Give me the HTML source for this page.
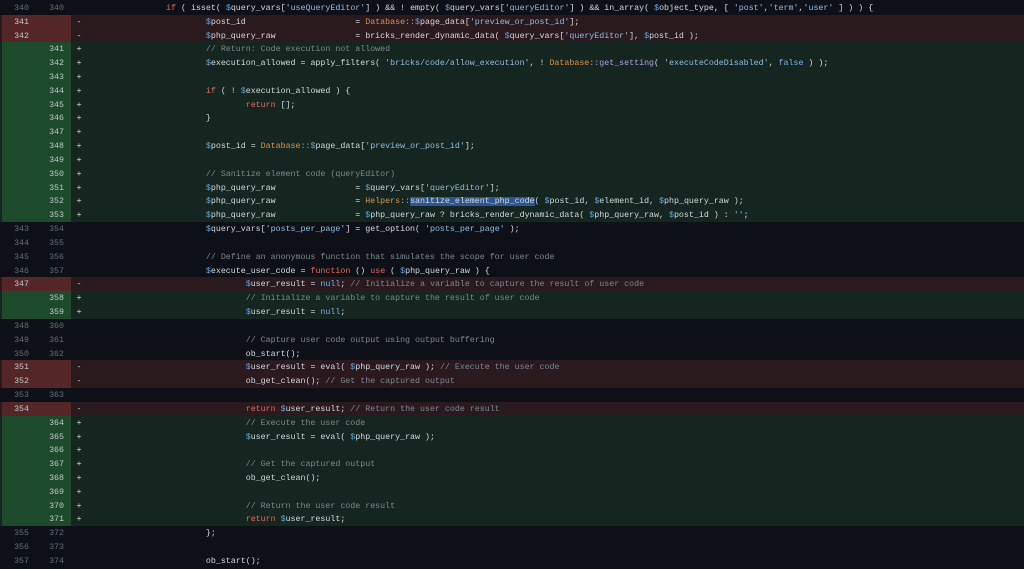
<!DOCTYPE html>
<html><head><meta charset="utf-8">
<style>
html,body{margin:0;padding:0;width:1024px;height:567px;overflow:hidden;background:#0d1117}
#w{position:absolute;left:0;top:.85px;width:1024px}
.r{position:relative;height:13.84px;width:1024px;font:8.31px/13.84px "Liberation Mono",monospace;color:#d3d9df;white-space:pre;tab-size:8}
.r>i{position:absolute;top:1px;font-style:normal;filter:blur(.35px)}
.r>i.g{top:0;filter:none}
.g{left:2px;width:69px;height:13.84px}
.a,.n{text-align:right;width:20px;color:#656c76}
.a{left:9px}.n{left:44px}
.m{left:76.5px}
.t{left:86.4px}
.d{background:#2a1a1e}.d .g{background:#552628}
.e{background:#14261f}.e .g{background:#1d4a2b}
.d .a,.d .n,.e .a,.e .n{color:#c0c8d0}
u{text-decoration:none}
.k{color:#e5675f}.s{color:#8fbde2}.v{color:#64a6de}.c{color:#7d868f}.o{color:#d99350}.p{color:#bd9be8}.b{color:#70b4ee}.q{color:#a0a8b0}
.h{background:#2f5590}
</style></head><body><div id="w">
<div class="r"><i class="a">340</i><i class="n">340</i><i class="t">		<u class="k">if</u> ( isset( <u class="v">$</u>query_vars[<u class="s">'useQueryEditor'</u>] ) &amp;&amp; ! empty( <u class="v">$</u>query_vars[<u class="s">'queryEditor'</u>] ) &amp;&amp; in_array( <u class="v">$</u>object_type, [ <u class="s">'post'</u>,<u class="s">'term'</u>,<u class="s">'user'</u> ] ) ) {</i></div>
<div class="r d"><i class="g"></i><i class="a">341</i><i class="m">-</i><i class="t">			<u class="v">$</u>post_id                      = <u class="o">Database</u><u class="q">::</u><u class="v">$</u>page_data[<u class="s">'preview_or_post_id'</u>];</i></div>
<div class="r d"><i class="g"></i><i class="a">342</i><i class="m">-</i><i class="t">			<u class="v">$</u>php_query_raw                = bricks_render_dynamic_data( <u class="v">$</u>query_vars[<u class="s">'queryEditor'</u>], <u class="v">$</u>post_id );</i></div>
<div class="r e"><i class="g"></i><i class="n">341</i><i class="m">+</i><i class="t">			<u class="c">// Return: Code execution not allowed</u></i></div>
<div class="r e"><i class="g"></i><i class="n">342</i><i class="m">+</i><i class="t">			<u class="v">$</u>execution_allowed = apply_filters( <u class="s">'bricks/code/allow_execution'</u>, ! <u class="o">Database</u><u class="q">::</u><u class="p">get_setting</u>( <u class="s">'executeCodeDisabled'</u>, <u class="b">false</u> ) );</i></div>
<div class="r e"><i class="g"></i><i class="n">343</i><i class="m">+</i></div>
<div class="r e"><i class="g"></i><i class="n">344</i><i class="m">+</i><i class="t">			<u class="k">if</u> ( ! <u class="v">$</u>execution_allowed ) {</i></div>
<div class="r e"><i class="g"></i><i class="n">345</i><i class="m">+</i><i class="t">				<u class="k">return</u> [];</i></div>
<div class="r e"><i class="g"></i><i class="n">346</i><i class="m">+</i><i class="t">			}</i></div>
<div class="r e"><i class="g"></i><i class="n">347</i><i class="m">+</i></div>
<div class="r e"><i class="g"></i><i class="n">348</i><i class="m">+</i><i class="t">			<u class="v">$</u>post_id = <u class="o">Database</u><u class="q">::</u><u class="v">$</u>page_data[<u class="s">'preview_or_post_id'</u>];</i></div>
<div class="r e"><i class="g"></i><i class="n">349</i><i class="m">+</i></div>
<div class="r e"><i class="g"></i><i class="n">350</i><i class="m">+</i><i class="t">			<u class="c">// Sanitize element code (queryEditor)</u></i></div>
<div class="r e"><i class="g"></i><i class="n">351</i><i class="m">+</i><i class="t">			<u class="v">$</u>php_query_raw                = <u class="v">$</u>query_vars[<u class="s">'queryEditor'</u>];</i></div>
<div class="r e"><i class="g"></i><i class="n">352</i><i class="m">+</i><i class="t">			<u class="v">$</u>php_query_raw                = <u class="o">Helpers</u><u class="q">::</u><u class="h">sanitize_element_php_code</u>( <u class="v">$</u>post_id, <u class="v">$</u>element_id, <u class="v">$</u>php_query_raw );</i></div>
<div class="r e"><i class="g"></i><i class="n">353</i><i class="m">+</i><i class="t">			<u class="v">$</u>php_query_raw                = <u class="v">$</u>php_query_raw ? bricks_render_dynamic_data( <u class="v">$</u>php_query_raw, <u class="v">$</u>post_id ) : <u class="s">''</u>;</i></div>
<div class="r"><i class="a">343</i><i class="n">354</i><i class="t">			<u class="v">$</u>query_vars[<u class="s">'posts_per_page'</u>] = get_option( <u class="s">'posts_per_page'</u> );</i></div>
<div class="r"><i class="a">344</i><i class="n">355</i></div>
<div class="r"><i class="a">345</i><i class="n">356</i><i class="t">			<u class="c">// Define an anonymous function that simulates the scope for user code</u></i></div>
<div class="r"><i class="a">346</i><i class="n">357</i><i class="t">			<u class="v">$</u>execute_user_code = <u class="k">function</u> () <u class="k">use</u> ( <u class="v">$</u>php_query_raw ) {</i></div>
<div class="r d"><i class="g"></i><i class="a">347</i><i class="m">-</i><i class="t">				<u class="v">$</u>user_result = <u class="b">null</u>; <u class="c">// Initialize a variable to capture the result of user code</u></i></div>
<div class="r e"><i class="g"></i><i class="n">358</i><i class="m">+</i><i class="t">				<u class="c">// Initialize a variable to capture the result of user code</u></i></div>
<div class="r e"><i class="g"></i><i class="n">359</i><i class="m">+</i><i class="t">				<u class="v">$</u>user_result = <u class="b">null</u>;</i></div>
<div class="r"><i class="a">348</i><i class="n">360</i></div>
<div class="r"><i class="a">349</i><i class="n">361</i><i class="t">				<u class="c">// Capture user code output using output buffering</u></i></div>
<div class="r"><i class="a">350</i><i class="n">362</i><i class="t">				ob_start();</i></div>
<div class="r d"><i class="g"></i><i class="a">351</i><i class="m">-</i><i class="t">				<u class="v">$</u>user_result = eval( <u class="v">$</u>php_query_raw ); <u class="c">// Execute the user code</u></i></div>
<div class="r d"><i class="g"></i><i class="a">352</i><i class="m">-</i><i class="t">				ob_get_clean(); <u class="c">// Get the captured output</u></i></div>
<div class="r"><i class="a">353</i><i class="n">363</i></div>
<div class="r d"><i class="g"></i><i class="a">354</i><i class="m">-</i><i class="t">				<u class="k">return</u> <u class="v">$</u>user_result; <u class="c">// Return the user code result</u></i></div>
<div class="r e"><i class="g"></i><i class="n">364</i><i class="m">+</i><i class="t">				<u class="c">// Execute the user code</u></i></div>
<div class="r e"><i class="g"></i><i class="n">365</i><i class="m">+</i><i class="t">				<u class="v">$</u>user_result = eval( <u class="v">$</u>php_query_raw );</i></div>
<div class="r e"><i class="g"></i><i class="n">366</i><i class="m">+</i></div>
<div class="r e"><i class="g"></i><i class="n">367</i><i class="m">+</i><i class="t">				<u class="c">// Get the captured output</u></i></div>
<div class="r e"><i class="g"></i><i class="n">368</i><i class="m">+</i><i class="t">				ob_get_clean();</i></div>
<div class="r e"><i class="g"></i><i class="n">369</i><i class="m">+</i></div>
<div class="r e"><i class="g"></i><i class="n">370</i><i class="m">+</i><i class="t">				<u class="c">// Return the user code result</u></i></div>
<div class="r e"><i class="g"></i><i class="n">371</i><i class="m">+</i><i class="t">				<u class="k">return</u> <u class="v">$</u>user_result;</i></div>
<div class="r"><i class="a">355</i><i class="n">372</i><i class="t">			};</i></div>
<div class="r"><i class="a">356</i><i class="n">373</i></div>
<div class="r"><i class="a">357</i><i class="n">374</i><i class="t">			ob_start();</i></div>
</div></body></html>
